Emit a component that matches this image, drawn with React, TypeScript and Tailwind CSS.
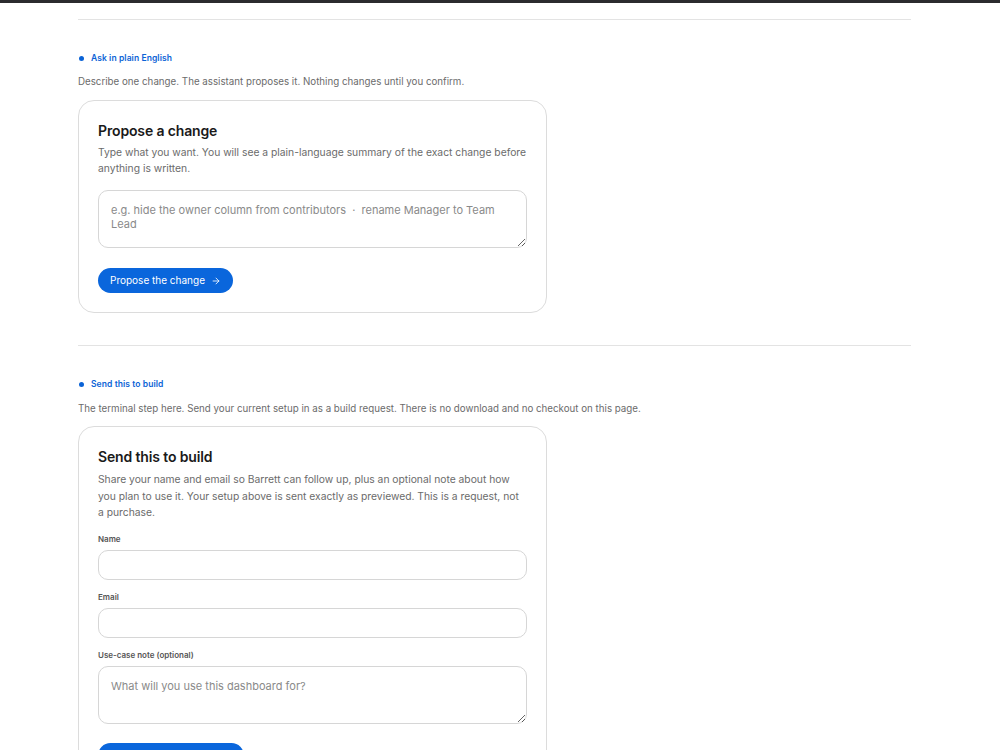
import { ArrowRight } from "lucide-react";

function SectionLabel({ children }: { children: React.ReactNode }) {
  return (
    <div className="flex items-center gap-[7px] h-[14px] text-[8.5px] font-semibold text-[#0b63d6] tracking-[0.01em]">
      <span className="w-[5px] h-[5px] rounded-full bg-[#0b63d6] ml-[1px]" />
      {children}
    </div>
  );
}

function Field({ label, children }: { label: string; children: React.ReactNode }) {
  return (
    <div className="flex flex-col">
      <label className="text-[8px] font-semibold text-[#555] leading-[12px] mb-[5px]">{label}</label>
      {children}
    </div>
  );
}

export default function App() {
  return (
    <div className="min-h-[750px] bg-white font-['Inter',_'Liberation_Sans',_sans-serif] text-[#1a1a1a]">
      <div className="h-[3px] bg-[#2b2b2f]" />
      <div className="ml-[78px] w-[833px] pb-10">
        <div className="mt-[16px] h-px bg-[#e3e3e3]" />

        <section className="pt-[31px]">
          <SectionLabel>Ask in plain English</SectionLabel>
          <p className="mt-[10px] text-[9.75px] leading-[14px] text-[#6b6b6b]">
            Describe one change. The assistant proposes it. Nothing changes until you confirm.
          </p>
          <div className="mt-[11px] w-[469px] rounded-[16px] border border-[#dcdcdc] px-[19px] pt-[20px] pb-[19px]">
            <h2 className="text-[14px] leading-[20px] font-semibold tracking-[-0.01em]">Propose a change</h2>
            <p className="mt-[4px] text-[10.3px] leading-[15.5px] text-[#6b6b6b]">
              Type what you want. You will see a plain-language summary of the exact change before anything is written.
            </p>
            <textarea
              className="mt-[14px] block w-full h-[58px] rounded-[10px] border border-[#d6d6d6] px-[12px] pt-[12px] pb-[10px] text-[11px] leading-[14px] placeholder:text-[#8a8a8a] outline-none"
              placeholder="e.g. hide the owner column from contributors  ·  rename Manager to Team Lead"
            />
            <button className="mt-[20px] h-[25px] px-[12px] rounded-full bg-[#0a66dc] text-white text-[10px] flex items-center gap-[6px]">
              Propose the change
              <ArrowRight size={10} strokeWidth={2} />
            </button>
          </div>
        </section>

        <div className="mt-[32px] h-px bg-[#e3e3e3]" />

        <section className="pt-[31px]">
          <SectionLabel>Send this to build</SectionLabel>
          <p className="mt-[11px] text-[9.75px] leading-[14px] text-[#6b6b6b]">
            The terminal step here. Send your current setup in as a build request. There is no download and no checkout on this page.
          </p>
          <div className="mt-[10px] w-[469px] rounded-[16px] border border-[#dcdcdc] px-[19px] pt-[20px] pb-[18px]">
            <h2 className="text-[14px] leading-[20px] font-semibold tracking-[-0.01em]">Send this to build</h2>
            <p className="mt-[4px] text-[10.3px] leading-[16.5px] text-[#6b6b6b]">
              Share your name and email so Barrett can follow up, plus an optional note about how you plan to use it. Your setup above is sent exactly as previewed. This is a request, not a purchase.
            </p>
            <div className="mt-[12px] flex flex-col gap-[11px]">
              <Field label="Name">
                <input className="h-[30px] rounded-[10px] border border-[#d6d6d6] px-[12px] text-[11px] outline-none" />
              </Field>
              <Field label="Email">
                <input className="h-[30px] rounded-[10px] border border-[#d6d6d6] px-[12px] text-[11px] outline-none" />
              </Field>
              <Field label="Use-case note (optional)">
                <textarea
                  className="block w-full h-[58px] rounded-[10px] border border-[#d6d6d6] px-[12px] pt-[12px] pb-[10px] text-[11px] leading-[14px] placeholder:text-[#8a8a8a] outline-none"
                  placeholder="What will you use this dashboard for?"
                />
              </Field>
            </div>
            <button className="mt-[19px] h-[25px] w-[146px] px-[12px] rounded-full bg-[#0a66dc] text-white text-[10px] flex items-center justify-center gap-[6px]">
              Send build request
              <ArrowRight size={10} strokeWidth={2} />
            </button>
          </div>
        </section>
      </div>
    </div>
  );
}
